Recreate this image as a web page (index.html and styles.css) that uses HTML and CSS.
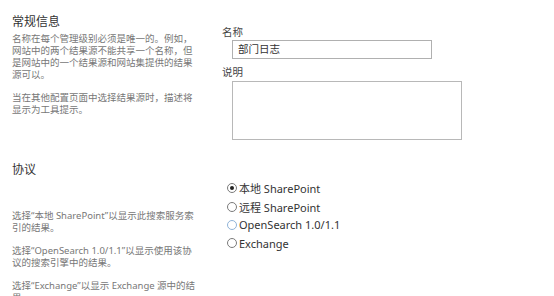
FILE: index.html
```html
<!DOCTYPE html>
<html lang="zh-CN">
<head>
    <meta charset="UTF-8">
    <title>常规信息</title>
    <link rel="stylesheet" href="styles.css">
</head>
<body>
    <div class="section general">
        <div class="info">
            <h3>常规信息</h3>
            <p>名称在每个管理级别必须是唯一的。例如，网站中的两个结果源不能共享一个名称，但是网站中的一个结果源和网站集提供的结果源可以。</p>
            <p>当在其他配置页面中选择结果源时，描述将显示为工具提示。</p>
        </div>
        <div class="fields">
            <label class="field-label">名称</label>
            <div class="textbox">部门日志</div>
            <label class="field-label desc-label">说明</label>
            <div class="textarea"></div>
        </div>
    </div>
    <div class="section protocol">
        <div class="info">
            <h3>协议</h3>
            <p class="first">选择“本地 SharePoint”以显示此搜索服务索引的结果。</p>
            <p>选择“OpenSearch 1.0/1.1”以显示使用该协议的搜索引擎中的结果。</p>
            <p>选择“Exchange”以显示 Exchange 源中的结果。</p>
        </div>
        <div class="options">
            <div class="option"><span class="radio checked"></span>本地 SharePoint</div>
            <div class="option"><span class="radio"></span>远程 SharePoint</div>
            <div class="option"><span class="radio hover"></span>OpenSearch 1.0/1.1</div>
            <div class="option"><span class="radio"></span>Exchange</div>
        </div>
    </div>
</body>
</html>
```

FILE: styles.css
```css
body {
    margin: 0;
    background-color: #ffffff;
    font-family: "Noto Sans", "Noto Sans CJK SC", sans-serif;
    color: #444444;
    overflow: hidden;
}
.section {
    display: grid;
    grid-template-columns: 222px 1fr;
}
.info {
    padding-left: 12px;
    width: 185px;
}
h3 {
    margin: 0;
    font-size: 12px;
    font-weight: normal;
    line-height: 16px;
    color: #333333;
}
.info p {
    margin: 0 0 11px 0;
    font-size: 9.5px;
    line-height: 12px;
    color: #777777;
}
.general {
    padding-top: 14px;
}
.general h3 {
    margin-bottom: 3px;
}
.fields {
    padding-top: 11px;
}
.field-label {
    display: block;
    font-size: 10.5px;
    line-height: 14px;
    color: #444444;
}
.textbox {
    margin: 1px 0 0 10px;
    width: 193px;
    height: 17px;
    border: 1px solid #b0b0b0;
    font-size: 10.5px;
    line-height: 17px;
    padding-left: 5px;
    color: #333333;
}
.desc-label {
    margin-top: 6px;
}
.textarea {
    margin: 2px 0 0 10px;
    width: 228px;
    height: 57px;
    border: 1px solid #b8b8b8;
}
.protocol {
    padding-top: 22px;
}
.protocol h3 {
    margin-bottom: 32px;
}
.options {
    padding-top: 17px;
    padding-left: 5px;
}
.option {
    display: flex;
    align-items: center;
    height: 18.4px;
    font-size: 11px;
    color: #333333;
}
.radio {
    width: 8px;
    height: 8px;
    border: 1px solid #7a7a7a;
    border-radius: 50%;
    margin-right: 2px;
    display: flex;
    align-items: center;
    justify-content: center;
}
.radio.checked::after {
    content: "";
    width: 4px;
    height: 4px;
    border-radius: 50%;
    background-color: #222222;
}
.radio.hover {
    border-color: #8fb3d8;
}
```
